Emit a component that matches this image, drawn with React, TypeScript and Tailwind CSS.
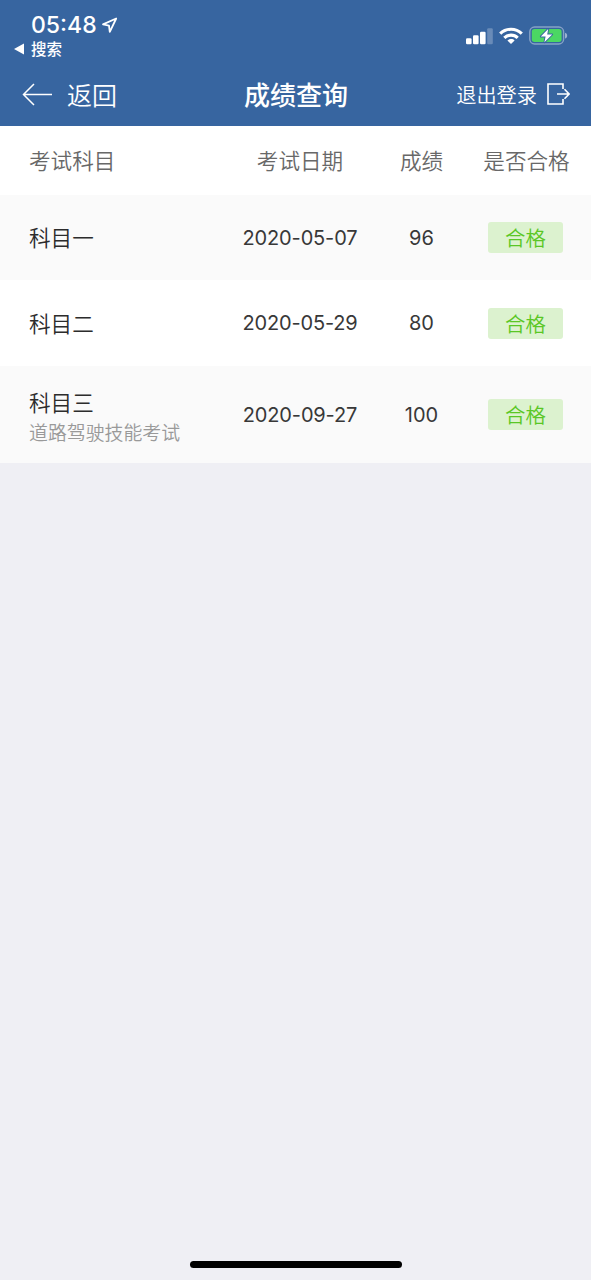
type Result = { subject: string; detail?: string; date: string; score: number };

const results: Result[] = [
  { subject: '科目一', date: '2020-05-07', score: 96 },
  { subject: '科目二', date: '2020-05-29', score: 80 },
  { subject: '科目三', detail: '道路驾驶技能考试', date: '2020-09-27', score: 100 },
];

const columns = 'grid grid-cols-[203px_136px_107px_101px] items-center pl-[29px]';
const rowStyles = ['h-[85px] bg-[#fafafa]', 'h-[86px] bg-white', 'h-[97px] bg-[#fafafa]'];

function StatusBar() {
  return (
    <div className="flex h-16 justify-between pt-3 pr-[23px] pl-[14px]">
      <div>
        <div className="flex h-[26px] items-center pl-[17px]">
          <span className="w-[69px] font-['Inter'] text-[23px] leading-[26px] font-medium whitespace-nowrap">05:48</span>
          <svg className="ml-[1px]" width="17" height="17" viewBox="0 0 17 17" fill="none" stroke="white" strokeWidth="1.8" strokeLinejoin="round">
            <path d="M15.2 1.5 2 7.4l6 1.2.8 6.2z" />
          </svg>
        </div>
        <div className="flex h-[20px] items-center gap-[7px] text-[15.5px] leading-[20px] font-medium">
          <svg className="mt-[2px]" width="10" height="12" viewBox="0 0 10 12" fill="white"><path d="M0 6 10 .5v11z" /></svg>
          搜索
        </div>
      </div>
      <div className="flex h-[48px] items-center">
        <svg width="27" height="18" viewBox="0 0 27 18" fill="white">
          <rect x="0" y="11.2" width="5.6" height="6" rx="1.2" />
          <rect x="7" y="8.2" width="5.6" height="9" rx="1.2" />
          <rect x="14" y="4.7" width="5.6" height="12.5" rx="1.2" />
          <rect x="21.2" y="1.2" width="5.6" height="16" rx="1.2" opacity=".25" />
        </svg>
        <svg className="ml-[6px]" width="24" height="18" viewBox="0 0 24 18" fill="none" stroke="white" strokeWidth="3.1">
          <path d="M1.2 6.7a15.4 15.4 0 0 1 21.6 0" />
          <path d="M5.3 10.8a9.6 9.6 0 0 1 13.4 0" />
          <path d="M12 12.1c-1.5 0-2.7.5-3.6 1.3L12 17l3.6-3.6c-.9-.8-2.1-1.3-3.6-1.3z" fill="white" stroke="none" />
        </svg>
        <svg className="ml-[6px]" width="39" height="20" viewBox="0 0 39 20" fill="none">
          <rect x=".8" y="1" width="33.8" height="17" rx="4.8" stroke="white" strokeOpacity=".4" strokeWidth="1.4" />
          <path d="M36 6.7c2.9.7 2.9 5.2 0 5.9z" fill="white" fillOpacity=".5" />
          <rect x="2.8" y="3" width="29.8" height="13" rx="2.7" fill="#4bd763" />
          <path d="M19.2 3 11.8 10.5h4.8l-1.2 5.8 7.8-7.9h-5z" fill="white" stroke="#3765a0" strokeWidth="1.8" strokeLinejoin="round" paintOrder="stroke" />
        </svg>
      </div>
    </div>
  );
}

function NavBar() {
  return (
    <div className="grid h-[62px] grid-cols-[1fr_104px_1fr] items-center pr-[21px] pl-[22px]">
      <div className="flex items-center gap-[15px] text-[25px] leading-[34px] font-[350]">
        <svg width="30" height="24" viewBox="0 0 30 24" fill="none" stroke="white" strokeWidth="1.5">
          <path d="M30 11.5H1.5M12 1 1.5 11.5 12 22" />
        </svg>
        <span className="pb-[2px]">返回</span>
      </div>
      <h1 className="pb-[2px] text-[26px] leading-[34px] font-medium whitespace-nowrap">成绩查询</h1>
      <div className="flex items-center justify-end gap-[10px] text-[20.2px] leading-[30px] font-[350] whitespace-nowrap">
        退出登录
        <svg className="mb-[2px]" width="23" height="22" viewBox="0 0 23 22" fill="none" stroke="white" strokeWidth="1.6">
          <path d="M16 6V1H1v20h15v-5M10 11h12M17.5 6.2l4.6 4.8-4.6 4.8" />
        </svg>
      </div>
    </div>
  );
}

export default function App() {
  return (
    <div className="min-h-screen bg-white font-['Noto_Sans_CJK_SC',sans-serif]">
      <div className="flex h-[1280px] w-[591px] flex-col bg-[#efeff4]">
        <header className="h-[126px] shrink-0 bg-[#3765a0] text-white">
          <StatusBar />
          <NavBar />
        </header>
        <main className="font-[350]">
          <div className={`${columns} h-[69px] bg-white text-[21.6px] text-[#686868]`}>
            <span>考试科目</span>
            <span className="text-center">考试日期</span>
            <span className="text-center">成绩</span>
            <span className="pl-[2px] text-center">是否合格</span>
          </div>
          {results.map((result, index) => (
            <div key={result.subject} className={`${columns} ${rowStyles[index]} text-[#2c2c2c]`}>
              <div className={result.detail ? 'pt-[3px]' : 'pb-[1px]'}>
                <div className="text-[21.6px] leading-[32px]">{result.subject}</div>
                {result.detail && <div className="text-[18.9px] leading-[28px] text-[#999999]">{result.detail}</div>}
              </div>
              <span className="text-center font-['Inter'] text-[20px] font-normal tracking-[-0.15px] text-[#383838]">{result.date}</span>
              <span className="text-center font-['Inter'] text-[20px] font-normal text-[#383838]">{result.score}</span>
              <span className="flex h-[31px] w-[75px] items-center justify-center justify-self-center rounded-[3px] bg-[#dcf2cf] text-[20.4px] leading-[31px] text-[#5ac725]">合格</span>
            </div>
          ))}
        </main>
        <div className="mt-auto mb-[12px] ml-[190px] h-[7px] w-[212px] rounded-full bg-black" />
      </div>
    </div>
  );
}
